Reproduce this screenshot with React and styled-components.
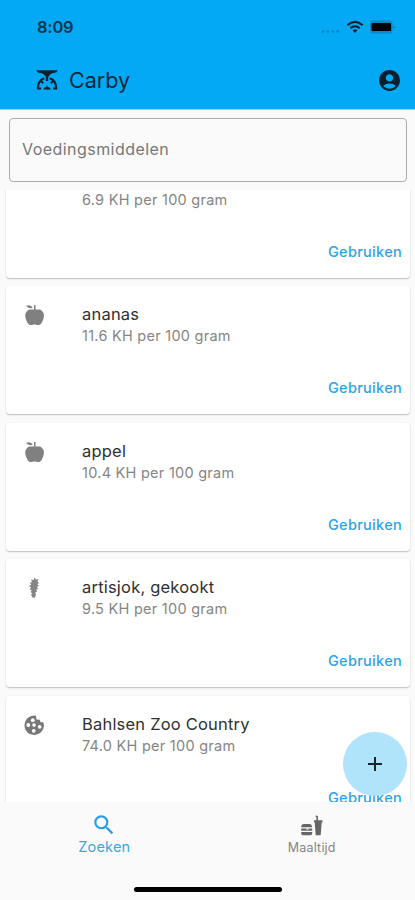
import React from "react";
import styled, { createGlobalStyle } from "styled-components";
import { MdAccountCircle, MdSearch, MdAdd } from "react-icons/md";

const Global = createGlobalStyle`
  * { box-sizing: border-box; }
  body { margin: 0; background: #fafafa; font-family: Inter, "Liberation Sans", sans-serif; }
  svg { display: block; flex: none; }
`;
const Screen = styled.div`
  width: 415px; height: 900px; display: flex; flex-direction: column;
  background: #fafafa; overflow: hidden; position: relative;
`;
const Header = styled.header`
  height: 110px; flex: none; background: #03a9f4; border-bottom: 1px solid #8bd5f9;
`;
const StatusBar = styled.div`
  height: 51px; padding: 3px 18px 0 37px; display: flex; align-items: center; justify-content: space-between;
`;
const Time = styled.span`
  font-size: 16.5px; font-weight: 600; letter-spacing: -0.2px; color: #06384f; line-height: 20px;
`;
const StatusIcons = styled.div`
  display: flex; align-items: center; gap: 6px;
`;
const AppBar = styled.div`
  height: 58px; padding: 0 13px 0 35px; display: flex; align-items: center;
`;
const AppTitle = styled.h1`
  margin: 0 auto 0 10px; font-size: 21.5px; font-weight: 400; letter-spacing: 0; color: #07293a; line-height: 28px;
`;
const Field = styled.div`
  flex: none; height: 64px; margin: 8px 8px 0 9px; padding: 0 12px 2px; display: flex; align-items: center;
  border: 1px solid #adadad; border-radius: 4px;
  font-size: 16px; letter-spacing: 0.45px; color: #777;
`;
const List = styled.main`
  flex: none; height: 612px; margin-top: 8px; padding: 0 5px 0 6px; overflow: hidden;
`;
const Cards = styled.div`
  display: flex; flex-direction: column; gap: 8.5px; margin-top: -40.5px;
`;
const Card = styled.article`
  height: 128px; flex: none; padding: 17px 8px 0 16px; background: #fff; border-radius: 4px;
  box-shadow: 0 1px 1.5px rgba(0,0,0,.24), 0 0 2px rgba(0,0,0,.04);
  display: flex; flex-direction: column;
`;
const CardTop = styled.div`
  display: flex; gap: 35px; height: 75px;
`;
const FoodIcon = styled.div`
  width: 25px; height: 25px; color: #777;
`;
const Name = styled.div`
  min-height: 22px; font-size: 16.5px; line-height: 22px; letter-spacing: 0.2px; color: #303030;
`;
const Amount = styled.div`
  font-size: 14.5px; line-height: 22px; letter-spacing: 0.26px; color: #858585;
`;
const UseButton = styled.button`
  align-self: flex-end; border: 0; padding: 0; background: none; color: #2fa3e7;
  font: 500 14.5px/20px Inter, "Liberation Sans", sans-serif; letter-spacing: 0.3px;
`;
const Fab = styled.button`
  position: absolute; left: 343px; top: 732px; width: 64px; height: 64px; padding: 0;
  border: 0; border-radius: 50%; background: #b0e4fb; color: #16242b;
  display: flex; align-items: center; justify-content: center;
`;
const Nav = styled.nav`
  flex: none; height: 80px; display: grid; grid-template-columns: 1fr 1fr; padding-top: 10px;
`;
const Tab = styled.div`
  display: flex; flex-direction: column; align-items: center; padding-left: 1px;
  padding-top: ${p => (p.$active ? 0 : 2)}px; gap: ${p => (p.$active ? 0 : 1)}px;
  color: ${p => (p.$active ? "#279fe5" : "#666")};
`;
const TabLabel = styled.span`
  font-size: ${p => (p.$active ? 14.5 : 12.5)}px; line-height: 18px; letter-spacing: 0.2px;
  color: ${p => (p.$active ? "#3aa5e8" : "#858585")};
`;
const HomeIndicator = styled.div`
  width: 148px; height: 5px; margin-left: 134px; margin-top: 5px; border-radius: 3px; background: #000; flex: none;
`;

const Scale = () => (
  <svg width="24" height="24" viewBox="0 0 24 24" fill="none" stroke="#07202d">
    <path d="M1.3 2.2H22.7L21.2 4.6Q15 5.2 13.8 8.5H10.2Q9 5.2 2.8 4.6Z" fill="#07202d" stroke="none" />
    <path d="M12 7v6" strokeWidth="2.4" />
    <path d="M9.3 10.2Q3 12 2.7 20.6M14.7 10.2Q21 12 21.3 20.6" strokeWidth="2.2" />
    <path d="M5.6 12.8l2.6 2.4M18.4 12.8l-2.6 2.4M2 20.6h4M18 20.6h4" strokeWidth="2" />
    <path d="M8 21.4l1.4-1.8 1.8-.6.8-1.8.8 1.8 1.8.6 1.4 1.8z" fill="#07202d" stroke="none" />
  </svg>
);
const Apple = () => (
  <svg width="25" height="25" viewBox="0 0 25 25" fill="#808080">
    <path d="M4.2 2.8C6.5 1.7 9.8 2.4 10.6 5C7.8 5.4 5.2 4.9 4.2 2.8Z" />
    <path d="M12 2h1.5v6H12z" />
    <path d="M8.7 6.6H16.5C18 6.6 19 7 20.2 8.2L21.8 10.4C22.3 13.5 21.5 16 20.3 18.4C19.2 20.9 17.9 22.1 16.2 22.1C14.8 22.1 14.2 21.6 12.5 21.6C10.9 21.6 10.3 22.1 9 22.1C7.3 22.1 6 20.9 4.9 18.4C3.7 16 2.9 13.5 3.4 10.4L5 8.2C6.1 7 7.1 6.6 8.7 6.6Z" />
  </svg>
);
const Artichoke = () => (
  <svg width="25" height="25" viewBox="0 0 25 25" fill="#858585">
    <path d="M12.5 1.4l1.3 2.1 3-.3-1.5 2.3 1.9 1.5-2 .9 1.7 2-2 .8 1.3 2.2-2 .6.9 2.3-1.7.5.5 3-1.4 2.7-2.4-.7-1-2.7 1.4-1.1-2-1.6 1.3-1.3-2.2-1.4 1.5-1.5-2.1-1.7 2.2-1.2-1.4-2.2 2.3-.4-1.2-2.5 2.7.3z" />
  </svg>
);
const Cookie = () => (
  <svg width="25" height="25" viewBox="0 0 25 25" fill="#777">
    <path d="M12.2 2.5A9.8 9.8 0 1 0 22 12.5L21.3 9.2L18.5 9.3L17.8 6.7L14.5 6.4L14 2.8Z" />
    <g fill="#fff"><circle cx="10.8" cy="7.2" r="1.9" /><circle cx="6.3" cy="12" r="1.9" /><circle cx="12" cy="12.1" r="1.8" /><circle cx="17.7" cy="13.8" r="1.9" /><circle cx="11.7" cy="17.8" r="1.9" /></g>
  </svg>
);
const Meal = () => (
  <svg width="24" height="24" viewBox="0 0 24 24" fill="#666">
    <path d="M1.2 13.2v-.9Q1.4 10 4 10h5.2q2.6 0 2.8 2.3v.9zM1.2 14.5h11v2.2h-11zM1.2 18h11v1.5q0 1.7-2 1.7H3.2q-2 0-2-1.7z" />
    <path d="M5.5 14.5l2 1.5 2-1.5" fill="#fafafa" />
    <path d="M14 6.2h8.5v2.1h-.8l-1 12.9h-5l-1-12.9H14zM16 1.3l2 1v4.5h-1.6V3.3l-1-.7z" />
  </svg>
);
const Wifi = () => (
  <svg width="18" height="14" viewBox="0 0 18 14" fill="none" stroke="#06202d" strokeWidth="2">
    <path d="M1.3 5.2Q9-1.5 16.7 5.2M4.3 8.2Q9 4.2 13.7 8.2" /><path d="M6.7 10.2Q9 8.3 11.3 10.2L9 12.9Z" fill="#06202d" stroke="none" />
  </svg>
);
const Signal = () => (
  <svg width="20" height="14" viewBox="0 0 20 14" fill="#0786c2">
    <path d="M2 10.4h2.5v2H2zM6.5 10.4H9v2H6.5zM11.5 10.4H14v2h-2.5zM16.5 10.4H19v2h-2.5z" />
  </svg>
);
const Battery = () => (
  <svg width="27" height="14" viewBox="0 0 27 14">
    <rect x="0" y=".4" width="22.5" height="13.2" rx="3.2" fill="#078bc8" />
    <path d="M23.4 4.5q3 2.5 0 5z" fill="#078bc8" /><rect x="1.5" y="3" width="19.6" height="8" rx="1" fill="#000" />
  </svg>
);

const foods = [
  { id: 1, amount: "6.9", icon: Apple },
  { id: 2, name: "ananas", amount: "11.6", icon: Apple },
  { id: 3, name: "appel", amount: "10.4", icon: Apple },
  { id: 4, name: "artisjok, gekookt", amount: "9.5", icon: Artichoke },
  { id: 5, name: "Bahlsen Zoo Country", amount: "74.0", icon: Cookie },
];

export default function App() {
  return (
    <Screen>
      <Global />
      <Header>
        <StatusBar>
          <Time>8:09</Time>
          <StatusIcons><Signal /><Wifi /><Battery /></StatusIcons>
        </StatusBar>
        <AppBar><Scale /><AppTitle>Carby</AppTitle><MdAccountCircle size={25} color="#07202d" /></AppBar>
      </Header>
      <Field>Voedingsmiddelen</Field>
      <List>
        <Cards>
          {foods.map(({ id, name, amount, icon: Icon }) => (
            <Card key={id}>
              <CardTop>
                <FoodIcon><Icon /></FoodIcon>
                <div><Name>{name}</Name><Amount>{amount} KH per 100 gram</Amount></div>
              </CardTop>
              <UseButton>Gebruiken</UseButton>
            </Card>
          ))}
        </Cards>
      </List>
      <Nav>
        <Tab $active><MdSearch size={26} /><TabLabel $active>Zoeken</TabLabel></Tab>
        <Tab><Meal /><TabLabel>Maaltijd</TabLabel></Tab>
      </Nav>
      <HomeIndicator />
      <Fab aria-label="+"><MdAdd size={24} /></Fab>
    </Screen>
  );
}
